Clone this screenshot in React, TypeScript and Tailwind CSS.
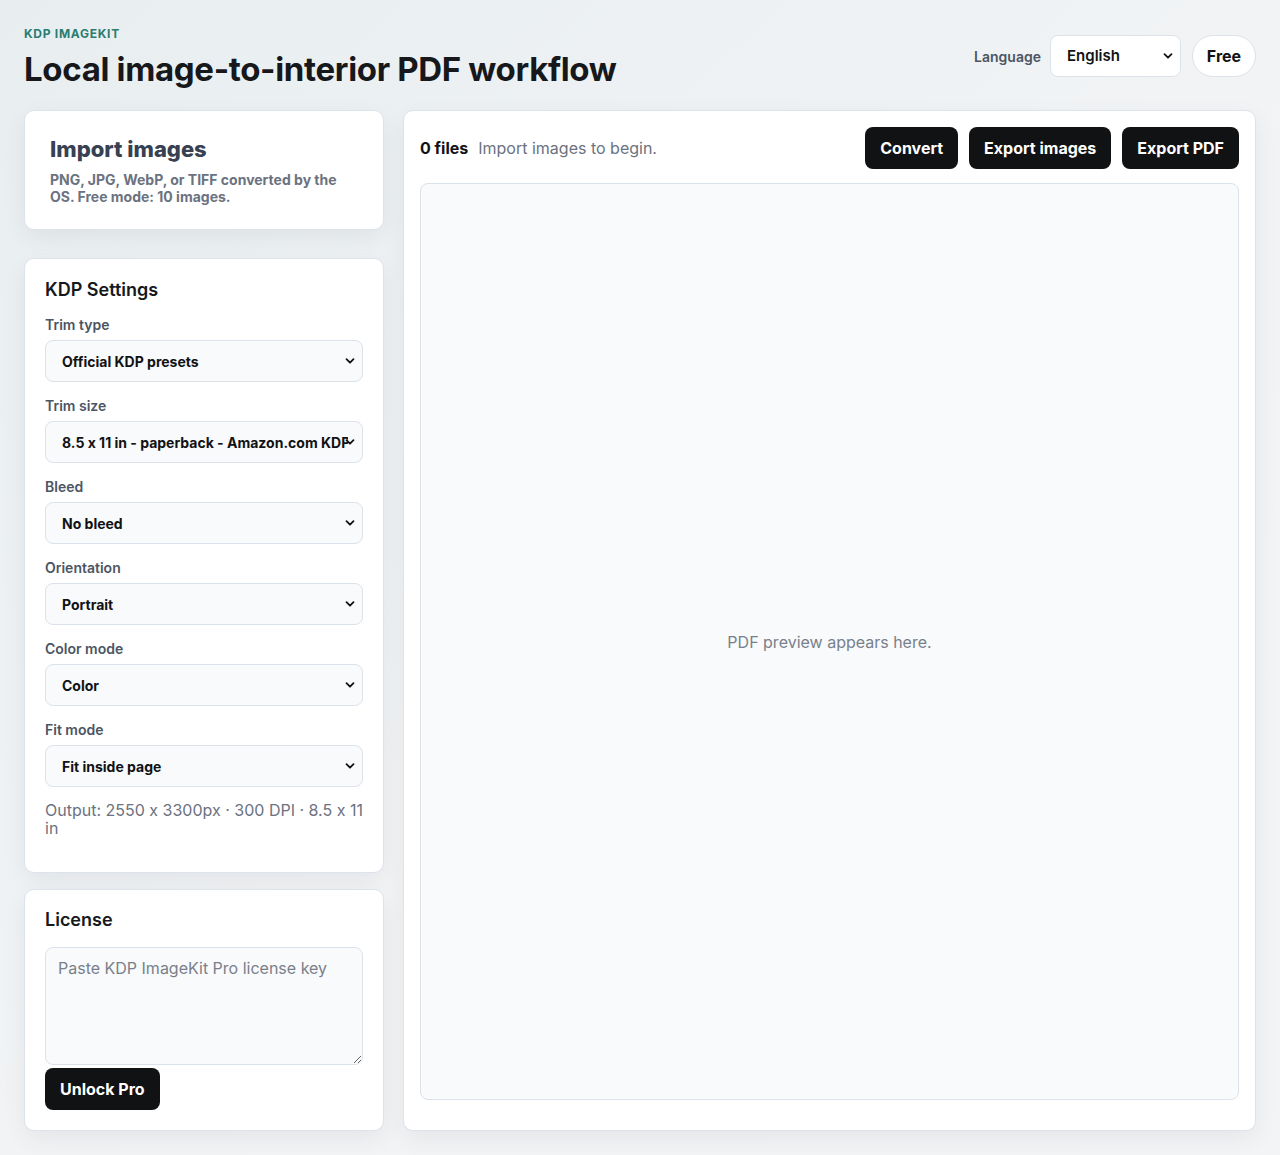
import React from "react";

const fields = [
  { label: "Trim type", value: "Official KDP presets" },
  { label: "Trim size", value: "8.5 x 11 in - paperback - Amazon.com KDP" },
  { label: "Bleed", value: "No bleed" },
  { label: "Orientation", value: "Portrait" },
  { label: "Color mode", value: "Color" },
  { label: "Fit mode", value: "Fit inside page" },
];

function Chevron() {
  return (
    <svg
      width="10"
      height="10"
      viewBox="0 0 10 10"
      className="pointer-events-none absolute right-[8px] top-1/2 -translate-y-1/2"
    >
      <path d="M1.5 3.2 5 6.7 8.5 3.2" fill="none" stroke="#111214" strokeWidth="1.8" strokeLinecap="round" strokeLinejoin="round" />
    </svg>
  );
}

function Select({ value }: { value: string }) {
  return (
    <div className="relative">
      <select
        defaultValue={value}
        className="h-[42px] w-full appearance-none overflow-hidden rounded-lg border border-[#dbe2ea] bg-[#f8fafc] pl-4 pr-[14px] text-[14px] font-bold text-[#111214] outline-none"
      >
        <option>{value}</option>
      </select>
      <Chevron />
    </div>
  );
}

export default function App() {
  return (
    <div className="min-h-[1155px] bg-gradient-to-br from-[#e8eef0] via-[#f1f3f5] to-[#f3f4f6] px-6 pt-[25px] pb-6 font-['Inter',sans-serif] text-[#111214] [font-feature-settings:'calt'_0]">
      <header className="flex items-start justify-between">
        <div>
          <div className="text-[12px] font-bold tracking-[0.06em] text-[#2b7d70]">KDP IMAGEKIT</div>
          <h1 className="mt-[6px] text-[33px] font-bold leading-[40px] tracking-[-0.01em] text-[#16181b]">
            Local image-to-interior PDF workflow
          </h1>
        </div>
        <div className="mt-[10px] flex items-center gap-[11px]">
          <span className="mr-[-2px] text-[14px] font-semibold text-[#4b5563]">Language</span>
          <div className="relative w-[131px]">
            <select
              defaultValue="English"
              className="h-[42px] w-full appearance-none rounded-lg border border-[#dbe2ea] bg-white pl-4 text-[15px] font-semibold text-[#111214] outline-none"
            >
              <option>English</option>
            </select>
            <Chevron />
          </div>
          <button className="h-[42px] w-[64px] rounded-full border border-[#dbe2ea] bg-white text-[16px] font-bold text-[#111214]">
            Free
          </button>
        </div>
      </header>

      <main className="mt-[21px] grid grid-cols-[360px_1fr] gap-[19px]">
        <div className="flex flex-col">
          <section className="h-[120px] rounded-[10px] border border-[#dde3ea] bg-white px-[25px] pt-[24px] shadow-[0_8px_24px_rgba(15,23,42,0.06)]">
            <h2 className="text-[22px] font-extrabold leading-[28px] text-[#374151]">Import images</h2>
            <p className="mt-[8px] text-[14px] font-bold leading-[17px] text-[#6b7280]">
              PNG, JPG, WebP, or TIFF converted by the OS. Free mode: 10 images.
            </p>
          </section>

          <section className="mt-[28px] h-[615px] rounded-[10px] border border-[#dde3ea] bg-white px-5 pt-[20px] shadow-[0_8px_24px_rgba(15,23,42,0.06)]">
            <h2 className="text-[18px] font-semibold leading-[22px] text-[#16181b]">KDP Settings</h2>
            <div className="mt-[15px] flex flex-col gap-[15px]">
              {fields.map((f) => (
                <label key={f.label} className="flex flex-col gap-[7px]">
                  <span className="text-[14px] font-semibold leading-[17px] text-[#4b5563]">{f.label}</span>
                  <Select value={f.value} />
                </label>
              ))}
            </div>
            <p className="mt-[14px] text-[16px] leading-[18px] text-[#6b7280]">
              Output: 2550 x 3300px · 300 DPI · 8.5 x 11 in
            </p>
          </section>

          <section className="mt-4 rounded-[10px] border border-[#dde3ea] bg-white px-5 pt-[19px] pb-5 shadow-[0_8px_24px_rgba(15,23,42,0.06)]">
            <h2 className="text-[18px] font-semibold leading-[22px] text-[#16181b]">License</h2>
            <textarea
              placeholder="Paste KDP ImageKit Pro license key"
              className="mt-[16px] block h-[118px] w-full rounded-lg border border-[#dbe2ea] bg-[#f8fafc] px-3 py-[10px] text-[16px] leading-[20px] text-[#111214] outline-none placeholder:text-[#7a808a]"
            />
            <button className="mt-[3px] h-[42px] rounded-lg bg-[#111214] px-[15px] text-[16px] font-bold text-white">
              Unlock Pro
            </button>
          </section>
        </div>

        <section className="flex flex-col rounded-[10px] border border-[#dde3ea] bg-white px-4 pt-4 pb-[30px] shadow-[0_8px_24px_rgba(15,23,42,0.06)]">
          <div className="flex items-center justify-between">
            <div className="flex items-baseline gap-[10px] text-[16px]">
              <span className="font-bold text-[#111214]">0 files</span>
              <span className="text-[#6b7280]">Import images to begin.</span>
            </div>
            <div className="flex gap-[11px]">
              <button className="h-[42px] rounded-lg bg-[#111214] px-[15px] text-[16px] font-bold text-white">Convert</button>
              <button className="h-[42px] rounded-lg bg-[#111214] px-[15px] text-[16px] font-bold text-white">Export images</button>
              <button className="h-[42px] rounded-lg bg-[#111214] px-[15px] text-[16px] font-bold text-white">Export PDF</button>
            </div>
          </div>
          <div className="mt-[14px] flex flex-1 items-center justify-center rounded-lg border border-[#dbe2ea] bg-[#f8fafc]">
            <span className="text-[16px] text-[#7a808a]">PDF preview appears here.</span>
          </div>
        </section>
      </main>
    </div>
  );
}
